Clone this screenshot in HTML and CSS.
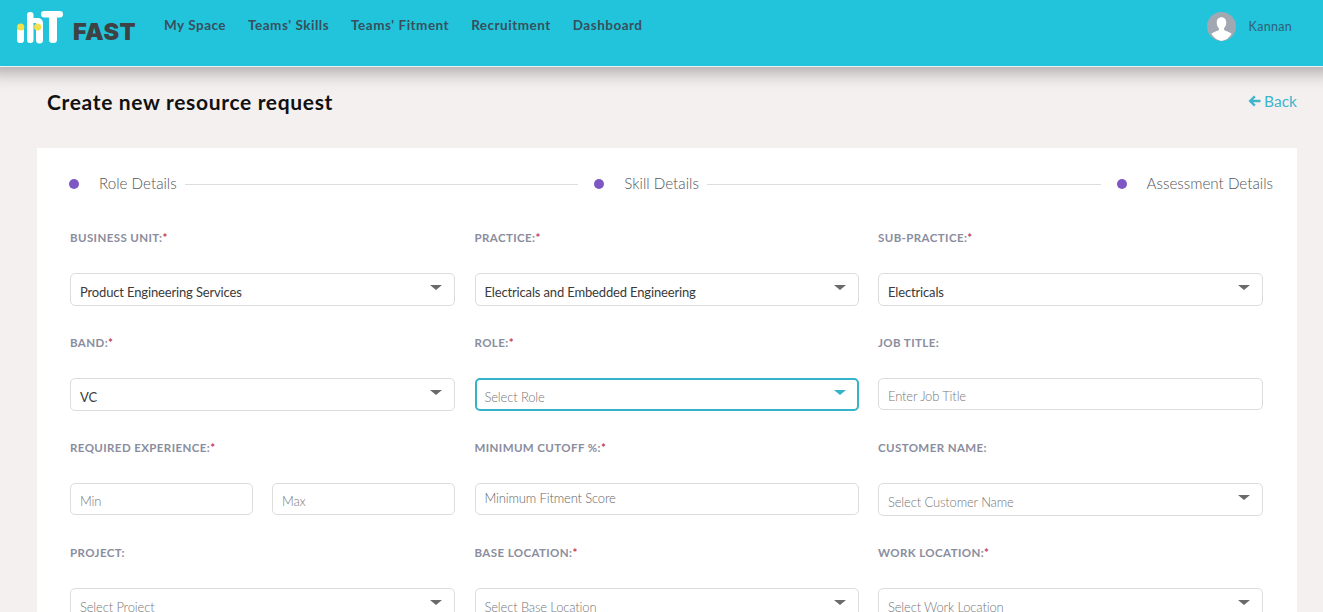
FILE: index.html
```html
<!DOCTYPE html>
<html lang="en">
<head>
    <meta charset="UTF-8">
    <title>FAST - Create new resource request</title>
    <link rel="stylesheet" href="styles.css">
</head>
<body>
    <header class="topbar">
        <div class="logo">
            <svg width="47" height="34" viewBox="0 0 47 34">
                <rect x="0" y="18" width="7" height="15" rx="3" fill="#fff"/>
                <circle cx="3.700" cy="17" r="3.600" fill="#f5e04a"/>
                <rect x="10" y="2" width="6.500" height="31" rx="3" fill="#fff"/>
                <path d="M16 8h5a5 5 0 0 1 5 5v17a3.500 3.500 0 0 1-7 0V13h-3z" fill="#fff"/>
                <circle cx="20.700" cy="17" r="3.600" fill="#f5e04a"/>
                <rect x="24" y="1" width="22" height="6.500" rx="3.200" fill="#fff"/>
                <rect x="32" y="5" width="8" height="28" rx="3.500" fill="#fff"/>
            </svg>
            <span class="logo-name">FAST</span>
        </div>
        <nav class="nav">
            <a href="#">My Space</a>
            <a href="#">Teams' Skills</a>
            <a href="#">Teams' Fitment</a>
            <a href="#">Recruitment</a>
            <a href="#">Dashboard</a>
        </nav>
        <div class="user">
            <svg class="avatar" width="29" height="29" viewBox="0 0 28 28">
                <circle cx="14" cy="14" r="14" fill="#a2a8b2"/>
                <path d="M14 5c3 0 4.600 2.200 4.600 5.200 0 2.200-.9 4.200-2.100 5.300v1.800c1.200 1 5.100 1.800 7.300 3.700A14 14 0 0 1 14 28a14 14 0 0 1-9.800-6.900c2.200-1.900 6.100-2.700 7.300-3.700v-1.800c-1.200-1.100-2.100-3.100-2.100-5.300C9.400 7.200 11 5 14 5z" fill="#fff"/>
            </svg>
            <span>Kannan</span>
        </div>
    </header>

    <div class="title-row">
        <h1>Create new resource request</h1>
        <a class="back" href="#">
            <svg width="13" height="12" viewBox="0 0 13 12"><path d="M6 .5 .5 6 6 11.500l1.700-1.700L5 7.300h7.500V4.700H5l2.700-2.500z" fill="#3fb4cc"/></svg>
            <span>Back</span>
        </a>
    </div>

    <main class="card">
        <div class="stepper">
            <span class="dot"></span>
            <span class="step-name">Role Details</span>
            <span class="step-line"></span>
            <span class="dot"></span>
            <span class="step-name">Skill Details</span>
            <span class="step-line"></span>
            <span class="dot"></span>
            <span class="step-name">Assessment Details</span>
        </div>

        <form class="form-grid">
            <div class="field">
                <label>BUSINESS UNIT:<em>*</em></label>
                <div class="box select"><span class="value">Product Engineering Services</span></div>
            </div>
            <div class="field">
                <label>PRACTICE:<em>*</em></label>
                <div class="box select"><span class="value">Electricals and Embedded Engineering</span></div>
            </div>
            <div class="field">
                <label>SUB-PRACTICE:<em>*</em></label>
                <div class="box select"><span class="value">Electricals</span></div>
            </div>

            <div class="field">
                <label>BAND:<em>*</em></label>
                <div class="box select"><span class="value">VC</span></div>
            </div>
            <div class="field">
                <label>ROLE:<em>*</em></label>
                <div class="box select focused"><span class="hint">Select Role</span></div>
            </div>
            <div class="field">
                <label>JOB TITLE:</label>
                <div class="box"><span class="hint">Enter Job Title</span></div>
            </div>

            <div class="field">
                <label>REQUIRED EXPERIENCE:<em>*</em></label>
                <div class="pair">
                    <div class="box"><span class="hint">Min</span></div>
                    <div class="box"><span class="hint">Max</span></div>
                </div>
            </div>
            <div class="field">
                <label>MINIMUM CUTOFF %:<em>*</em></label>
                <div class="box filled"><span class="hint">Minimum Fitment Score</span></div>
            </div>
            <div class="field">
                <label>CUSTOMER NAME:</label>
                <div class="box select"><span class="hint">Select Customer Name</span></div>
            </div>

            <div class="field">
                <label>PROJECT:</label>
                <div class="box select"><span class="hint">Select Project</span></div>
            </div>
            <div class="field">
                <label>BASE LOCATION:<em>*</em></label>
                <div class="box select"><span class="hint">Select Base Location</span></div>
            </div>
            <div class="field">
                <label>WORK LOCATION:<em>*</em></label>
                <div class="box select"><span class="hint">Select Work Location</span></div>
            </div>
        </form>
    </main>
</body>
</html>
```

FILE: styles.css
```css
html, body {
    height: 612px;
    overflow: hidden;
}
body {
    margin: 0;
    font-family: "Lato", "Open Sans", sans-serif;
    color: #333;
    background-color: #f4f0ef;
}
a {
    text-decoration: none;
}

.topbar {
    display: flex;
    align-items: center;
    height: 66px;
    padding: 0 31px 0 17px;
    background-color: #22c4dc;
    border-bottom: 1px solid #e8f4f6;
    box-shadow: 0 -12px 18px 16px rgba(0,0,0,0.35);
}
.logo {
    display: flex;
    align-items: flex-start;
    height: 34px;
    margin-top: -12px;
}
.logo-name {
    margin: 10px 0 0 9px;
    line-height: 24px;
    font-family: "Inter", sans-serif;
    font-size: 23.500px;
    font-weight: 900;
    letter-spacing: 0.4px;
    color: #3f4244;
}
.nav {
    display: flex;
    gap: 22px;
    margin-left: 28px;
    margin-top: -17px;
}
.nav a {
    font-size: 13.500px;
    font-weight: 700;
    letter-spacing: 0.5px;
    color: #36505c;
}
.user {
    display: flex;
    align-items: center;
    gap: 13px;
    margin-left: auto;
    margin-top: -14px;
    font-size: 12.500px;
    letter-spacing: 0.3px;
    color: #2f6378;
}

.title-row {
    display: flex;
    justify-content: space-between;
    height: 81px;
    padding: 23px 26px 0 47px;
    box-sizing: border-box;
}
h1 {
    margin: 0;
    line-height: 24px;
    font-size: 21px;
    font-weight: 700;
    letter-spacing: 0.67px;
    color: #111;
}
.back {
    display: flex;
    align-items: center;
    gap: 3px;
    height: 20px;
    margin-top: 1px;
    font-size: 15.500px;
    color: #3fb4cc;
}

.card {
    box-sizing: border-box;
    height: 464px;
    margin: 0 26px 0 37px;
    padding: 18px 24px 0 32px;
    overflow: hidden;
    background-color: #fff;
}
.stepper {
    display: flex;
    align-items: center;
    height: 36px;
}
.dot {
    flex: none;
    width: 10px;
    height: 10px;
    border-radius: 50%;
    background-color: #7e57c2;
}
.step-name {
    flex: none;
    margin: -2px 0 0 20px;
    font-size: 15.200px;
    font-weight: 300;
    color: #555;
}
.step-line {
    flex: 1;
    height: 1px;
    margin: 0 16px 0 8px;
    background-color: #ddd;
}

.form-grid {
    display: grid;
    grid-template-columns: 385px 384px 385px;
    grid-auto-rows: 105px;
    column-gap: 19.5px;
    margin-top: 28px;
    margin-left: 1px;
}
.field label {
    display: block;
    height: 43px;
    line-height: 16px;
    font-size: 11.500px;
    font-weight: 700;
    letter-spacing: 0.4px;
    color: #8a8d9e;
}
.field em {
    font-style: normal;
    color: #c2405c;
}
.box {
    position: relative;
    box-sizing: border-box;
    height: 32px;
    padding: 8px 9px 0;
    line-height: 18px;
    font-size: 13px;
    letter-spacing: -0.15px;
    background-color: #fff;
    border: 1px solid #dcdcdc;
    border-radius: 5px;
}
.select {
    height: 33px;
    padding-top: 9px;
}
.select::after {
    content: "";
    position: absolute;
    top: 11px;
    right: 12px;
    border-left: 6px solid transparent;
    border-right: 6px solid transparent;
    border-top: 5px solid #6a6a6a;
}
.focused {
    border: 2px solid #35b3c9;
    padding: 8px 8px 0;
}
.focused::after {
    top: 10px;
    right: 11px;
    border-top-color: #35b3c9;
}
.filled {
    padding-top: 5px;
}
.filled .hint {
    color: #666;
}
.value {
    color: #3a3a3a;
}
.hint {
    font-weight: 300;
    color: #777;
}
.pair {
    display: flex;
    gap: 19px;
}
.pair .box {
    flex: 1;
}
```
